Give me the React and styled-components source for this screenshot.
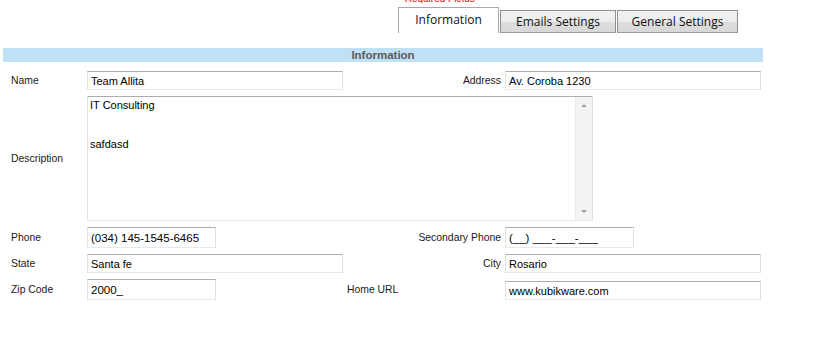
import styled, { createGlobalStyle } from "styled-components";

const GlobalStyle = createGlobalStyle`
  html, body {
    margin: 0;
    padding: 0;
    background: #fff;
  }
  body {
    font-family: "Liberation Sans", Arial, sans-serif;
  }
`;

const TABS = ["Information", "Emails Settings", "General Settings"];

function App() {
  return (
    <Page>
      <GlobalStyle />
      <Note>
        <span>* Required Fields</span>
      </Note>
      <TabBar>
        {TABS.map((t, i) => (
          <Tab key={t} $active={i === 0}>
            {t}
          </Tab>
        ))}
      </TabBar>
      <SectionTitle>Information</SectionTitle>
      <Form>
        <Label>Name</Label>
        <Field $size="wide">Team Allita</Field>
        <Label $right>Address</Label>
        <Field $size="wide">Av. Coroba 1230</Field>

        <Label>Description</Label>
        <TextBox>
          <TextContent>{"IT Consulting\n\n\nsafdasd"}</TextContent>
          <Scroll>
            <Arrow $up />
            <Arrow />
          </Scroll>
        </TextBox>

        <Label>Phone</Label>
        <Field $size="short" $mask>
          (034) 145-1545-6465
        </Field>
        <Label $right>Secondary Phone</Label>
        <Field $size="short" $mask>
          (__) ___-___-___
        </Field>

        <Label>State</Label>
        <Field $size="wide">Santa fe</Field>
        <Label $right>City</Label>
        <Field $size="wide">Rosario</Field>

        <Label>Zip Code</Label>
        <Field $size="short" $mask>
          2000_
        </Field>
        <Label $left>Home URL</Label>
        <Field $size="wide">www.kubikware.com</Field>
      </Form>
    </Page>
  );
}

const Page = styled.div`
  width: 760px;
  padding-left: 3px;
`;

const Note = styled.div`
  height: 3px;
  overflow: hidden;
  margin-left: 395px;

  & span {
    display: block;
    margin-top: -7px;
    color: #f00;
    font-size: 10px;
    line-height: 11px;
  }
`;

const TabBar = styled.div`
  display: flex;
  align-items: flex-end;
  height: 30px;
  padding-left: 395px;
`;

const Tab = styled.div`
  box-sizing: border-box;
  display: flex;
  align-items: center;
  justify-content: center;
  height: ${(p) => (p.$active ? "26px" : "23px")};
  width: ${(p) => (p.$active ? "101px" : "auto")};
  border: 1px solid ${(p) => (p.$active ? "#a7a7a7" : "#8f8f8f")};
  border-bottom: ${(p) => (p.$active ? "none" : "1px solid #9a9a9a")};
  margin-right: 1px;
  background: ${(p) =>
    p.$active ? "#fff" : "linear-gradient(#f3f3f3 0%, #ebebeb 50%, #dddddd 51%, #d8d8d8 100%)"};
  font-family: "Open Sans", "Liberation Sans", sans-serif;
  font-size: 12px;
  color: #111;
  padding-bottom: ${(p) => (p.$active ? "2px" : "0")};

  &:nth-child(2) {
    width: 116px;
  }
  &:nth-child(3) {
    width: 121px;
  }
`;

const SectionTitle = styled.div`
  margin-top: 15px;
  height: 14px;
  line-height: 14px;
  background: #c0e1f5;
  text-align: center;
  font-weight: bold;
  font-size: 11.5px;
  color: #5b5b5b;
`;

const Form = styled.div`
  display: grid;
  grid-template-columns: 84px 255px 163px 256px;
  grid-template-rows: 19px 125px 21px 19px 21px;
  row-gap: 6px;
  margin-top: 9px;
  font-size: 10.4px;
  color: #1a1a1a;
`;

const Label = styled.div`
  align-self: center;
  padding-left: ${(p) => (p.$right ? "0" : p.$left ? "5px" : "8px")};
  padding-right: ${(p) => (p.$right ? "4px" : "0")};
  text-align: ${(p) => (p.$right ? "right" : "left")};
  white-space: nowrap;
`;

const Field = styled.div`
  box-sizing: border-box;
  align-self: end;
  width: ${(p) => (p.$size === "short" ? "129px" : "256px")};
  height: ${(p) => (p.$mask ? "21px" : "19px")};
  padding: 0 3px;
  display: flex;
  align-items: center;
  border: 1px solid;
  border-color: #abadb3 #dbdfe6 #e3e9ef #e2e3ea;
  font-size: ${(p) => (p.$mask ? "11.5px" : "11px")};
  color: #000;
  white-space: pre;
`;

const TextBox = styled.div`
  grid-column: 2 / 5;
  box-sizing: border-box;
  width: 506px;
  height: 125px;
  display: flex;
  border: 1px solid;
  border-color: #abadb3 #dbdfe6 #e3e9ef #e2e3ea;
`;

const TextContent = styled.div`
  flex: 1;
  padding: 2px 2px;
  font-size: 11px;
  line-height: 13px;
  color: #000;
  white-space: pre;
`;

const Scroll = styled.div`
  width: 16px;
  display: flex;
  flex-direction: column;
  justify-content: space-between;
  align-items: center;
  padding: 7px 0;
  background: #f3f3f3;
  border-left: 1px solid #eaeaea;
`;

const Arrow = styled.div`
  width: 0;
  height: 0;
  border-left: 3px solid transparent;
  border-right: 3px solid transparent;
  ${(p) =>
    p.$up ? "border-bottom: 3px solid #a2a2a2;" : "border-top: 3px solid #a2a2a2;"}
`;

export default App;
